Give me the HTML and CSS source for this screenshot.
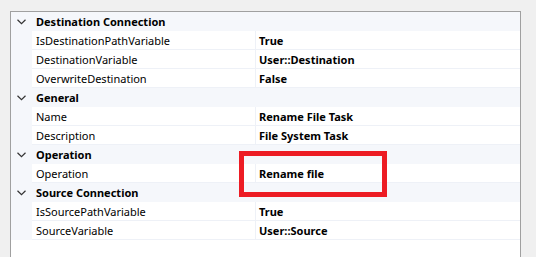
FILE: index.html
```html
<!DOCTYPE html>
<html lang="en">
<head>
  <meta charset="UTF-8">
  <title>Properties</title>
  <link rel="stylesheet" href="styles.css">
</head>
<body>
  <div class="grid">
    <div class="cat"><span class="chev"><svg width="9" height="6" viewBox="0 0 9 6"><path d="M0.5 0.8 L4.5 4.6 L8.5 0.8" fill="none" stroke="#333" stroke-width="1.2"/></svg></span><span class="cat-name">Destination Connection</span></div>
    <div class="prop"><span class="gut"></span><span class="name">IsDestinationPathVariable</span><span class="val">True</span></div>
    <div class="prop"><span class="gut"></span><span class="name">DestinationVariable</span><span class="val">User::Destination</span></div>
    <div class="prop"><span class="gut"></span><span class="name">OverwriteDestination</span><span class="val">False</span></div>

    <div class="cat"><span class="chev"><svg width="9" height="6" viewBox="0 0 9 6"><path d="M0.5 0.8 L4.5 4.6 L8.5 0.8" fill="none" stroke="#333" stroke-width="1.2"/></svg></span><span class="cat-name">General</span></div>
    <div class="prop"><span class="gut"></span><span class="name">Name</span><span class="val">Rename File Task</span></div>
    <div class="prop"><span class="gut"></span><span class="name">Description</span><span class="val">File System Task</span></div>

    <div class="cat"><span class="chev"><svg width="9" height="6" viewBox="0 0 9 6"><path d="M0.5 0.8 L4.5 4.6 L8.5 0.8" fill="none" stroke="#333" stroke-width="1.2"/></svg></span><span class="cat-name">Operation</span></div>
    <div class="prop"><span class="gut"></span><span class="name">Operation</span><span class="val">Rename file</span></div>

    <div class="cat"><span class="chev"><svg width="9" height="6" viewBox="0 0 9 6"><path d="M0.5 0.8 L4.5 4.6 L8.5 0.8" fill="none" stroke="#333" stroke-width="1.2"/></svg></span><span class="cat-name">Source Connection</span></div>
    <div class="prop"><span class="gut"></span><span class="name">IsSourcePathVariable</span><span class="val">True</span></div>
    <div class="prop"><span class="gut"></span><span class="name">SourceVariable</span><span class="val">User::Source</span></div>

    <!-- highlight drawn over the Operation value -->
    <div class="mark"></div>
  </div>
</body>
</html>
```
FILE: styles.css
```css
body {
  margin: 0;
  height: 257px;
  overflow: hidden;
  background: #f0f0f0;
  font-family: "Noto Sans", "Segoe UI", sans-serif;
  font-size: 11px;
  color: #000;
}

.grid {
  position: relative;
  margin: 11px 0 0 10px;
  width: 509px;
  height: 246px;
  background: #fff;
  border: 1px solid #a0a0a0;
  border-bottom: none;
}

.cat,
.prop {
  display: flex;
  height: 19px;
  align-items: stretch;
}

.cat {
  background: #f5f7fb;
}

.chev {
  width: 21px;
  display: flex;
  align-items: center;
  justify-content: center;
  padding-top: 1px;
  box-sizing: border-box;
}

.cat-name {
  padding-left: 4px;
  font-weight: bold;
  line-height: 20px;
}

.gut {
  width: 21px;
  background: #f5f7fb;
}

.name,
.val {
  line-height: 19px;
  border-bottom: 1px solid #eef1f7;
}

.name {
  width: 219px;
  padding-left: 4px;
  border-right: 1px solid #eef1f7;
}

.val {
  flex: 1;
  padding-left: 3px;
  font-weight: bold;
}

.mark {
  position: absolute;
  left: 228px;
  top: 139px;
  width: 138px;
  height: 36px;
  border: 5px solid #ed1c24;
}
```
